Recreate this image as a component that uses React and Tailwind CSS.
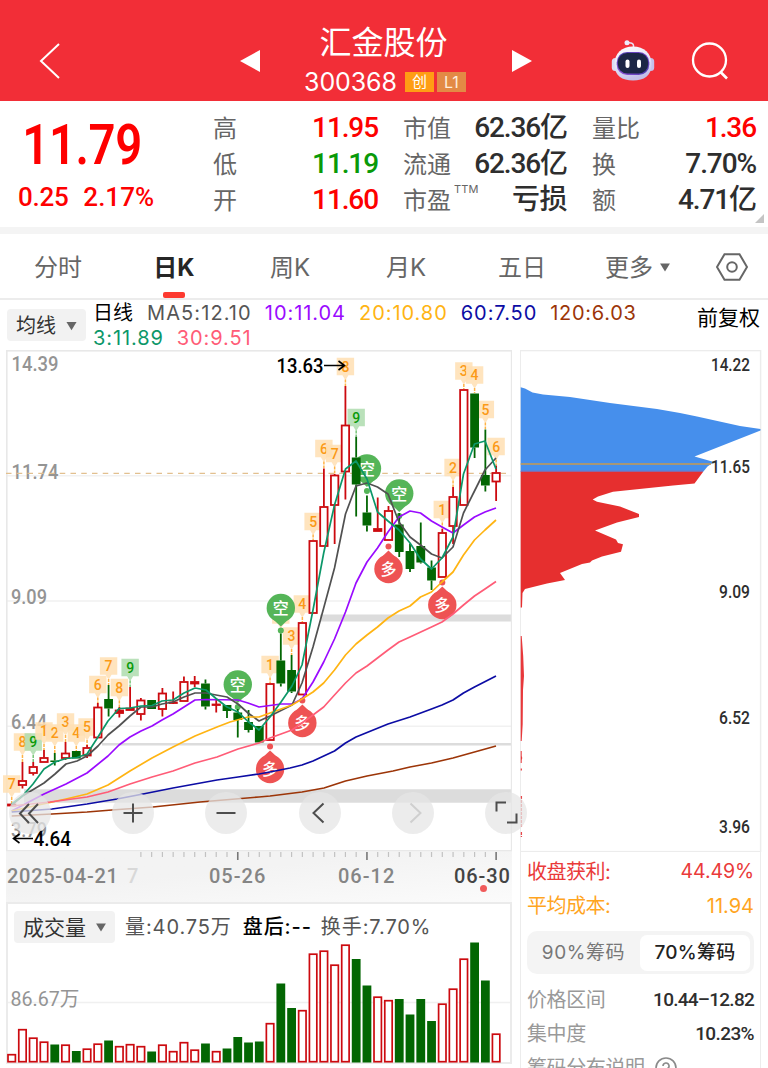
import React from 'react';

const RED = '#cc0a0f';
const GREEN = '#036603';
const STEP = 10.765;
const cx = (i) => 11.7 + STEP * i;

// [high, bodyTop, bodyBottom, low, isDown]
const CANDLES = [
  [804, 804, 806, 806], [762, 780.5, 785.5, 788.5], [762, 766.5, 773.5, 775.5], [750, 757.5, 762.5, 762.5],
  [753, 760.5, 762, 765.5, 1], [742, 753, 758.5, 760], [751, 751, 758.5, 758.5, 1], [745, 747.5, 756, 758],
  [703, 707, 738, 738], [685, 699, 708.5, 716.5, 1], [707, 710, 713.5, 717.5], [687, 708, 710.5, 710.5],
  [698, 700, 714.5, 720.5], [700, 700, 709, 709, 1], [688, 693, 709.5, 716.5], [691.5, 702, 703, 704],
  [676.5, 681.5, 701.5, 701.5], [676, 681.5, 684, 687], [679.5, 683.5, 706.5, 709.5, 1], [699, 704, 705, 712.5],
  [705, 705, 711, 718, 1], [709, 712.5, 720, 737.5, 1], [710, 722, 730, 732.5, 1], [726, 726, 742.5, 742.5, 1],
  [683.5, 683.5, 740.5, 740.5], [633.5, 660.5, 683.5, 686.5, 1], [655, 670, 691.5, 693, 1], [622.5, 622.5, 695, 695],
  [540.5, 540.5, 613.5, 613.5], [468.5, 506.5, 546.5, 546.5], [474, 475, 505.5, 544], [386, 425, 472, 499.5],
  [436.5, 457.5, 484.5, 516.5, 1], [495.5, 512.5, 525.5, 531.5, 1], [497.5, 528.5, 531.5, 531.5], [506, 510.5, 540.5, 540.5],
  [513, 524.5, 552, 557, 1], [543.5, 551, 569, 572, 1], [522.5, 546, 562.5, 563.5, 1], [560.5, 567.5, 580.5, 590, 1],
  [529, 532.5, 577.5, 577.5], [487, 496.5, 526.5, 544], [389.5, 389.5, 505.5, 505.5], [393.5, 393.5, 447.5, 458, 1],
  [429.5, 475, 485.5, 491.5, 1], [465.5, 472.5, 482, 501],
];

const VOLUME_TOPS = [
  1054, 1029, 1037.5, 1041.5, 1044.5, 1044.5, 1051, 1048.5, 1043.5, 1040.5, 1046, 1044, 1046, 1051.5, 1044.5, 1051,
  1042, 1049.5, 1043.5, 1051, 1048.5, 1037, 1042.5, 1041.5, 1023, 983.5, 1008, 1010, 953.5, 950.5, 964.5, 944.5,
  959, 985.5, 996.5, 1000, 999, 1014.5, 999, 1021, 1003.5, 988.5, 958.5, 942.5, 980.5, 1033.5,
];

const LINES = [
  { color: '#9a0bff', points: '11.7,811 44,794 66,784 87,773 108,756 119,745 130,737 141,731 152,726 162,720 173,714 184,707 195,700 206,699.5 238,700 248,703 259,707 281,704 292,704 302,699 313,682 323.7,662 334.5,639 345.5,612 356,583 367,562 377.5,548 388,532 399,517 410,511 420.5,513 431.5,521 442,527 453,533 463.5,525 474.5,517 485,512 496,508' },
  { color: '#515151', points: '11.7,805 22.5,796 44,783 55,774 66,764 77,761 87,756 98,746 108,735 119,726 130,716 141,707 152,707 162,704 173,702 184,697 195,693 206,693 216,695 227,697 238,704 248,713 259,721 270,716 292,705 302,683 313,647 323.7,608 334.5,568 345.5,514 356,486 367,483 377.5,487 388,494 399,522 410,537 420.5,545 431.5,554 442,558 453,547 463.5,513 474.5,491 485,470 496,458' },
  { color: '#ffb413', points: '11.7,811 43,804 66,799 87,794 108,785 130,771 152,758 173,747 195,736 217,727 230,722 248,717 259,717 270,713 292,705 302,699 313,692 323.7,683 334.5,670 345.5,655 356,644 367,635 377.5,627 388,618 399,611 410,606 420.5,597 431.5,592 442,582 453,572 463.5,555 474.5,540 485,530 496,520' },
  { color: '#ff5c77', points: '11.7,806 50,802 87,797 108,792 130,784 152,777 173,771 195,763 217,757 238,749 259,743 270,738 281,734 292,730 302,723 313,715 323.7,707 334.5,695 345.5,683 356,673 367,666 377.5,658 388,650 399,642 410,637 431.5,627 442,622 453,614 463.5,605 474.5,596 485,589 496,581.5' },
  { color: '#0c0ca4', points: '11.7,812 52,809 87,804 117,799 143,794 173,788 195,784 217,780 238,777 259,774 270,772 290,768 302,765 313,761 334.5,751 345.5,743 356,737 388,724 410,717 431.5,709 442,705 453,700 463.5,693 474.5,687 496,676' },
  { color: '#9c3508', points: '11.7,816 52,814 87,812 112,810 153,807 200,802 259,797 270,796 302,792 324,788 345.5,781 367,776 393,771 410,767 431.5,763 453,758 474.5,752 496,746' },
  { color: '#0c9769', points: '11.7,804 22.5,796 33,784 44,769 55,762 66,758.5 77,757.5 87,754 98,737 108,721 119,708.5 130,708 141,706 152,705.5 162,701 173,700 184,693 195,688 206,690 216,698.5 227,707 238,712 248,721.5 259,730 270,717 281,702 292,686 302,665 313,610 323.7,553 334.5,505 345.5,469 356,461 367,479 377.5,512 388,521 399,530 410,543 420.5,559 431.5,569 442,558 453,537 463.5,474 474.5,444 485,441 496,469' },
];

// [candle index, label, centre y, end of the dotted stem]
const FLAGS = [
  [0, 7, 784, 804], [1, 8, 742, 762], [2, 9, 742, 762], [3, 1, 731, 750], [4, 2, 733, 753], [5, 3, 722, 742],
  [6, 4, 733, 751], [7, 5, 727, 745], [8, 6, 684.5, 703], [9, 7, 666, 685], [10, 8, 687.5, 707], [11, 9, 667.5, 687],
  [24, 1, 664.5, 683], [25, 2, 615, 633], [26, 3, 636, 655], [27, 4, 604, 622], [28, 5, 521.5, 540], [29, 6, 448.5, 468],
  [30, 7, 453.5, 474], [31, 8, 366.5, 386], [32, 9, 417.5, 436], [40, 1, 509.5, 529], [41, 2, 467.5, 487],
  [42, 3, 371, 389], [43, 4, 375, 393], [44, 5, 409.5, 429], [45, 6, 446.5, 465],
];

const SHORTS = [[21, 684.5], [25, 608], [33, 468.5], [36, 493.5]];
const LONGS = [[24, 769], [27, 723], [35, 569], [40, 605]];

const QUOTES = [
  [['高', '11.95', 'text-[#fe0000]'], ['低', '11.19', 'text-[#099a09]'], ['开', '11.60', 'text-[#fe0000]']],
  [['市值', '62.36亿', 'text-[#2e2e2e]'], ['流通', '62.36亿', 'text-[#2e2e2e]'], ['市盈', '亏损', 'text-[#2e2e2e]']],
  [['量比', '1.36', 'text-[#fe0000]'], ['换', '7.70%', 'text-[#2e2e2e]'], ['额', '4.71亿', 'text-[#2e2e2e]']],
];

const NUM = "font-['Roboto','Noto_Sans_CJK_SC',sans-serif]";

const Caret = ({ className }) => (
  <svg viewBox="0 0 12 10" className={className}><path d="M0.5 0.5h11L6 9.5z" fill="currentColor" /></svg>
);

const Robot = () => (
  <svg viewBox="0 0 44 42" className="h-[42px] w-11">
    <defs>
      <linearGradient id="shell" x1="0" y1="0" x2="0.3" y2="1">
        <stop offset="0" stopColor="#ffffff" />
        <stop offset="0.6" stopColor="#e3e2f6" />
        <stop offset="1" stopColor="#c4c0e8" />
      </linearGradient>
      <linearGradient id="visor" x1="1" y1="0" x2="0" y2="1">
        <stop offset="0" stopColor="#7a45c8" />
        <stop offset="0.5" stopColor="#4e3fb0" />
        <stop offset="1" stopColor="#9a52dc" />
      </linearGradient>
    </defs>
    <path d="M22.500 8V5.500C22.500 3.200 20 2.500 16.500 3" fill="none" stroke="#e6e0f4" strokeWidth="1.500" />
    <circle cx="16" cy="2.800" r="2.500" fill="#eeeafb" />
    <rect x="0.8" y="18" width="7" height="13" rx="3.5" fill="#dddcf4" />
    <rect x="36.2" y="18" width="7" height="13" rx="3.5" fill="#c5c0ea" />
    <path d="M22 6.500C33 6.500 40.500 13 40.500 24.500S33 40.500 22 40.500 3.500 36 3.500 24.500 11 6.500 22 6.500z" fill="url(#shell)" />
    <rect x="5.700" y="12" width="32.600" height="23" rx="10.500" fill="url(#visor)" />
    <rect x="6.800" y="13" width="30.400" height="20.600" rx="9.500" fill="#1c2645" />
    <rect x="14.500" y="19.500" width="4" height="8.500" rx="2" fill="#fff" />
    <rect x="26" y="19.500" width="4" height="8.500" rx="2" fill="#fff" />
  </svg>
);

const Header = () => (
  <header className="flex h-[101px] shrink-0 bg-[#f22e37] pt-[26px] text-white">
    <div className="flex h-[70px] w-[240px] items-center pl-[39px]">
      <svg viewBox="0 0 22 36" className="h-9 w-[22px]"><path d="M20 1L2 18l18 17" fill="none" stroke="#fff" strokeWidth="2" /></svg>
    </div>
    <div className="flex h-[70px] w-[292px] items-center justify-between">
      <svg viewBox="0 0 20 22" className="h-[22px] w-5"><path d="M20 0v22L0 11z" fill="#fff" /></svg>
      <div className="flex flex-col items-center pr-[3px]">
        <h1 className="-mt-[3px] h-[38px] pr-[2px] text-[32px] leading-[38px]">汇金股份</h1>
        <div className="mt-[6px] flex h-7 items-center pl-[1px]">
          <span className="text-[25px] leading-7 tracking-[-0.1px]">300368</span>
          <span className="ml-2 flex h-5 w-[29px] items-center justify-center bg-[#ff9d14] text-[15px] leading-5">创</span>
          <span className="ml-[3px] flex h-5 w-[29px] items-center justify-center bg-[#e38a45] text-[16px] leading-5 text-[#ffeedd]">L1</span>
        </div>
      </div>
      <svg viewBox="0 0 20 22" className="h-[22px] w-5"><path d="M0 0v22l20-11z" fill="#fff" /></svg>
    </div>
    <div className="flex h-[70px] flex-1 items-center pl-[79px]">
      <Robot />
      <svg viewBox="0 0 38 38" className="ml-9 h-[38px] w-[38px]">
        <circle cx="18.500" cy="18" r="16.500" fill="none" stroke="#fff" strokeWidth="2.300" />
        <path d="M29.500 30L36 36.500" stroke="#fff" strokeWidth="2.600" />
      </svg>
    </div>
  </header>
);

const Quote = () => (
  <section className="relative flex h-[126px] shrink-0 pt-[9px]">
    <div className={`${NUM} w-[213px] font-medium text-[#fe0000]`}>
      <div className="h-[70px] origin-left scale-x-[0.86] pl-[26px] text-[55px] leading-[71px] font-semibold tracking-[-0.5px]">11.79</div>
      <div className="flex h-[34px] gap-[15px] pl-[18px] text-[26px] leading-[34px]">
        <span className="tracking-[-0.3px]">0.25</span>
        <span>2.17%</span>
      </div>
    </div>
    {QUOTES.map((col, c) => (
      <div key={c} className={c === 0 ? 'w-[165px]' : 'ml-[25px] w-[164px]'}>
        {col.map(([label, value, color]) => (
          <div key={label} className="flex h-9 items-center justify-between">
            <span className="flex pt-0.5 text-[24px] leading-9 text-[#666]">
              {label}
              {label === '市盈' && <sup className="top-0 ml-[3px] text-[11px] leading-3 tracking-[0.2px]">TTM</sup>}
            </span>
            <span className={`${NUM} ${color} text-[28px] leading-9 font-medium ${label === '市盈' ? 'tracking-[-0.5px]' : 'tracking-[-1.1px]'}`}>{value}</span>
          </div>
        ))}
      </div>
    ))}
    <svg viewBox="0 0 9 9" className="absolute right-1 bottom-[4px] h-[9px] w-[9px]"><path d="M9 0v9H0z" fill="#c4c4c4" /></svg>
  </section>
);

const Tabs = () => (
  <nav className="flex h-[66px] shrink-0 border-b-2 border-[#ececec] text-[24px] text-[#666]">
    {['分时', '日K', '周K', '月K', '五日', '更多'].map((tab) => (
      <div
        key={tab}
        className={`relative flex w-[116px] items-center justify-center pt-[3px] ${tab === '日K' ? 'font-bold text-[#262626]' : ''}`}
      >
        {tab}
        {tab === '更多' && <Caret className="ml-[6px] h-[9px] w-3" />}
        {tab === '日K' && <span className="absolute bottom-0 h-[6px] w-[22px] rounded-[2px] bg-[#fd3a30]" />}
      </div>
    ))}
    <div className="flex flex-1 items-center justify-center pt-0.5">
      <svg viewBox="0 0 32 28" className="h-7 w-8" fill="none" stroke="#666" strokeWidth="2">
        <path d="M8.500 1.200h15L31 14l-7.500 12.800h-15L1 14z" />
        <circle cx="16" cy="14" r="4.800" />
      </svg>
    </div>
  </nav>
);

const Averages = () => (
  <section className="flex h-[50px] shrink-0 pl-[7px] text-[20px]">
    <div className="mt-[9px] flex h-8 w-[79px] items-center rounded bg-[#f2f2f2] pt-px pl-[9px] text-[20px] text-[#333]">
      均线
      <Caret className="ml-2.5 h-[10px] w-[11px] text-[#666]" />
    </div>
    <div className="ml-[7px] flex-1 pt-px leading-[25px]">
      <div className="flex h-[25px] gap-[13px] tracking-[0.95px] whitespace-nowrap">
        <span className="mr-px tracking-normal text-black">日线</span>
        <span className="tracking-[1.1px] text-[#555]">MA5:12.10</span>
        <span className="text-[#9a0bff]">10:11.04</span>
        <span className="text-[#ffb413]">20:10.80</span>
        <span className="text-[#0c0ca4]">60:7.50</span>
        <span className="tracking-[0.7px] text-[#9c3508]">120:6.03</span>
      </div>
      <div className="flex h-[25px] gap-[13px] tracking-[0.9px]">
        <span className="text-[#0c9769]">3:11.89</span>
        <span className="text-[#ff5c77]">30:9.51</span>
      </div>
    </div>
    <span className="pt-[5px] pr-2 text-[21px] leading-[25px] text-black">前复权</span>
  </section>
);

const Flag = ({ i, label, y, end }) => {
  const x = cx(i);
  const nine = label === 9;
  return (
    <g>
      <path d={`M${x - 8.7} ${y - 8.7}h17.400v17.400h-5.700l-3 5-3-5h-5.700z`} fill={nine ? '#aedcae' : '#ffdfb3'} fillOpacity="0.85" />
      <path d={`M${x} ${y + 13}V${end}`} stroke={nine ? '#79c579' : '#ffb347'} strokeWidth="1.500" strokeDasharray="3 1" />
      <text x={x} y={y + 5} textAnchor="middle" fontSize="14" fontWeight="500" fill={nine ? '#099a09' : '#fb9a17'}>{label}</text>
    </g>
  );
};

const Balloon = ({ i, y, up }) => {
  const x = cx(i);
  const fill = up ? '#ee5353' : '#55b558';
  const d = up ? -1 : 1;
  return (
    <g fill={fill}>
      <circle cx={x} cy={y} r="14.200" />
      <path d={`M${x - 8} ${y + d * 11}L${x} ${y + d * 18.5}L${x + 8} ${y + d * 11}z`} />
      <circle cx={x} cy={y + d * 22.5} r="3" />
      <text x={x} y={y + 6} textAnchor="middle" fontSize="16" fontWeight="500" fill="#fff">{up ? '多' : '空'}</text>
    </g>
  );
};

const Candle = ({ i, data: [high, top, bottom, low, down] }) => {
  const x = cx(i);
  const color = down ? GREEN : RED;
  const h = Math.max(bottom - top, 1);
  return (
    <g stroke={color}>
      <path d={`M${x} ${high}V${top}M${x} ${bottom}V${low}`} strokeWidth="1.800" />
      {down
        ? <rect x={x - 4.4} y={top} width="8.800" height={h} fill={color} stroke="none" />
        : <rect x={x - 3.7} y={top + 0.5} width="7.400" height={Math.max(h - 1, 0.5)} fill={h > 4 ? '#fff' : RED} strokeWidth="1.800" />}
    </g>
  );
};

// DIN-like figures: squeezed to a fixed run width
const Fig = ({ x, y, w, children, ...rest }) => (
  <text x={x} y={y} textLength={w} lengthAdjust="spacingAndGlyphs" {...rest}>{children}</text>
);

const PriceChart = () => (
  <svg viewBox="0 350 512 502" className={`${NUM} block h-[502px] w-[512px]`}>
    <g stroke="#f1f1f1" strokeWidth="1.500">
      <path d="M7 475.800H511M7 601H511M7 726.300H511" />
    </g>
    <path d="M320 618H511" stroke="#dcdcdc" strokeWidth="7" />
    <path d="M102 744.200H511" stroke="#dcdcdc" strokeWidth="2.500" />
    <path d="M24 796H511" stroke="#dcdcdc" strokeWidth="13.500" />
    <rect x="6.800" y="350.800" width="504.800" height="500" fill="none" stroke="#e8e8e8" strokeWidth="1.600" />
    <g fill="#949494" fontSize="20" fontWeight="500">
      <Fig x="11.500" y="371" w="47">14.39</Fig>
      <Fig x="11.500" y="478.500" w="47">11.74</Fig>
      <Fig x="11" y="604" w="36">9.09</Fig>
      <Fig x="11" y="729" w="36">6.44</Fig>
      <Fig x="11" y="836.500" w="36">3.79</Fig>
    </g>
    <path d="M6 473.300H508" stroke="#e2c08f" strokeWidth="1.200" strokeDasharray="5.500 5.250" />
    {FLAGS.map(([i, label, y, end]) => <Flag key={i} i={i} label={label} y={y} end={end} />)}
    {SHORTS.map(([i, y]) => <Balloon key={i} i={i} y={y} />)}
    {LONGS.map(([i, y]) => <Balloon key={i} i={i} y={y} up />)}
    {CANDLES.map((data, i) => <Candle key={i} i={i} data={data} />)}
    {LINES.map(({ color, points }) => (
      <polyline key={color} points={points} fill="none" stroke={color} strokeWidth="1.700" strokeLinejoin="round" />
    ))}
    <g fill="#000" fontSize="20.500" fontWeight="500">
      <Fig x="276.500" y="373" w="47">13.63</Fig>
      <Fig x="33.500" y="846" w="37.500">4.64</Fig>
    </g>
    <g fill="none" stroke="#000" strokeWidth="1.600">
      <path d="M324 365.500h20M338.500 361l6 4.500-6 4.500" />
      <path d="M33 838.500H14M19.500 834l-6 4.500 6 4.500" />
    </g>
  </svg>
);

const BUTTONS = [
  { d: 'M20 12l-9 9.500 9 9.500M29 12l-9 9.500 9 9.500', gap: 'ml-[9px]' },
  { d: 'M11.500 21h19M21 11.500v19', gap: 'ml-[61px]' },
  { d: 'M11.500 21h19', gap: 'ml-[51px]' },
  { d: 'M24.500 11.500L14.500 21l10 9.500', gap: 'ml-[52px]' },
  { d: 'M18.500 11.500l10 9.500-10 9.500', gap: 'ml-[51px]', dim: true },
  { d: 'M11.500 19.500v-9h9.500M31.500 21.500v9H22', gap: 'ml-[51px]' },
];

const Controls = () => (
  <div className="absolute top-[442px] left-0 z-10 flex">
    {BUTTONS.map(({ d, gap, dim }) => (
      <button key={d} className={`${gap} h-[42px] w-[42px] rounded-full bg-[#e6e6e6]/75`}>
        <svg viewBox="0 0 42 42" className="h-[42px] w-[42px]">
          <path d={d} fill="none" stroke={dim ? '#cfcfcf' : '#4d4d4d'} strokeWidth="2" />
        </svg>
      </button>
    ))}
  </div>
);

const DateAxis = () => (
  <div className={`${NUM} relative ml-[6px] h-[50px] w-[506px] bg-linear-to-br from-[#f3f3f3] from-40% to-[#fbfbfb] text-[20px] font-medium text-[#858585]`}>
    <svg viewBox="6 852 506 10" className="block h-[10px] w-[506px]">
      {CANDLES.map((_, i) => {
        const major = i === 21 || i === 33 || i === 45;
        return i > 11 && (
          <path key={i} d={`M${cx(i)} 852v${major ? 8 : 5}`} stroke={major ? '#777' : '#c2c2c2'} strokeWidth={major ? 1.6 : 1.2} />
        );
      })}
    </svg>
    <div className="flex h-7 items-center pl-px whitespace-nowrap">
      <span className="w-[115px] tracking-[0.7px]">2025-04-21</span>
      <span className="ml-[5px] w-[82px] text-[#d8d8d8]">7</span>
      <span className="w-[129px] tracking-[1px]">05-26</span>
      <span className="w-[116px] tracking-[1px]">06-12</span>
      <span className="tracking-[0.9px] text-[#444]">06-30</span>
    </div>
    <span className="absolute right-[25px] bottom-[10px] h-[7px] w-[7px] rounded-full bg-[#f05a5a]" />
  </div>
);

const Volume = () => (
  <div className="relative ml-[6px] h-[162px] w-[506px] border-2 border-[#ebebeb] text-[20px]">
    <div className="flex h-[44px] items-center pt-[2px] pl-[6px] whitespace-nowrap">
      <div className="flex h-8 w-[101px] items-center rounded bg-[#f2f2f2] pt-px pl-[9px] text-[21px] text-[#333]">
        成交量
        <Caret className="ml-[9px] h-[9px] w-3 text-[#666]" />
      </div>
      <span className="ml-2.5 tracking-[0.9px] text-[#555]">量:40.75万</span>
      <span className="ml-[11px] font-medium tracking-[0.9px] text-black">盘后:--</span>
      <span className="ml-[9px] tracking-[0.9px] text-[#555]">换手:7.70%</span>
    </div>
    <svg viewBox="8 948 502 114" className={`${NUM} block h-[114px] w-[502px] overflow-visible`}>
      <path d="M8 1002.500H510" stroke="#f0f0f0" strokeWidth="1.500" />
      <Fig x="10.500" y="1005.500" w="69" fontSize="20.500" fill="#949494">86.67万</Fig>
      {VOLUME_TOPS.map((top, i) => (
        CANDLES[i][4]
          ? <rect key={i} x={cx(i) - 4.4} y={top} width="8.800" height={1062.5 - top} fill={GREEN} />
          : <rect key={i} x={cx(i) - 3.7} y={top + 0.7} width="7.400" height={1061 - top} fill="#fff" stroke={RED} strokeWidth="1.700" />
      ))}
    </svg>
  </div>
);

const ChipChart = () => (
  <svg viewBox="520 350 242 502" className={`${NUM} block h-[502px] w-[242px]`}>
    <rect x="520.300" y="350.600" width="240.300" height="501" fill="none" stroke="#ececec" strokeWidth="1.400" />
    <path d="M520.700 387.300L525 388.500 532.500 392.500 543 394.500 570 397 590 400 610 403 657 409 680 413 697 416.500 740 426 760.500 429 760.500 430.500 694.500 456.500 714 462 707.500 466.500 703 472H520.700z" fill="#468fec" />
    <path d="M520.700 472H703L694.500 483.600 673 485.500 637 489.300 613 491.700 598 496.500 592.700 499.500 597 501.700 620 506.500 639 514V517L617 522.500 595 530.500 616 539.500 618 543 623 544.300 621 551.700 602 556.500 592 560.500 590 562.500 582 564 560 573 565 580 547 583.500 525 589 522.500 593 522 607.500H520.700z" fill="#e62f2f" />
    <path d="M520.700 471.300H703" stroke="#8a68a5" strokeWidth="1.200" />
    <path d="M520.700 464H711" stroke="#c99a50" strokeWidth="1.300" />
    <path d="M520.700 636h1l1.500 20 .8 20-1 14-.3 34-1 17h-1zM520.700 751h1v5l.6 2-.6 2v3h-1zM520.700 768.500h1.200v2h-1.200z" fill="#e8383b" />
    <path d="M521.400 796v32M521.400 832v5" stroke="#e8484b" strokeWidth="1.300" strokeDasharray="3 1" />
    <g fill="#2e2e2e" fontSize="18.500" fontWeight="500">
      <Fig x="711" y="370.500" w="39">14.22</Fig>
      <Fig x="711" y="473" w="39">11.65</Fig>
      <Fig x="719" y="598" w="31">9.09</Fig>
      <Fig x="719" y="723.500" w="31">6.52</Fig>
      <Fig x="719" y="833" w="31">3.96</Fig>
    </g>
  </svg>
);

const ChipStats = () => (
  <div className="h-[216px] w-[241px] border-x border-[#ececec] pt-[3px] pr-[6px] pl-[6px] text-[20px]">
    <div className="flex h-[34px] items-center justify-between text-[#ea3a3a]">
      <span className="tracking-[-0.5px]">收盘获利:</span>
      <span className="text-[19.500px] tracking-[-0.1px]">44.49%</span>
    </div>
    <div className="flex h-[34px] items-center justify-between text-[#ffa51f]">
      <span className="tracking-[-0.5px]">平均成本:</span>
      <span>11.94</span>
    </div>
    <div className="mt-2 flex h-[43px] items-center rounded-[10px] bg-[#f4f4f4] pr-1 text-[19px]">
      <span className="flex-1 pt-0.5 text-center tracking-[0.6px] text-[#777]">90%筹码</span>
      <span className="flex h-9 w-[110px] items-center justify-center rounded-[7px] bg-white pt-0.5 font-medium tracking-[0.3px] text-[#222]">70%筹码</span>
    </div>
    <div className="mt-[9px] flex h-[34px] items-center justify-between">
      <span className="tracking-[-0.4px] text-[#999]">价格区间</span>
      <span className={`${NUM} text-[19px] font-medium tracking-[-0.75px] text-[#2e2e2e]`}>10.44–12.82</span>
    </div>
    <div className="flex h-[34px] items-center justify-between">
      <span className="tracking-[-0.4px] text-[#999]">集中度</span>
      <span className={`${NUM} text-[19px] font-medium tracking-[-0.6px] text-[#2e2e2e]`}>10.23%</span>
    </div>
    <div className="flex h-[34px] items-center tracking-[-0.4px] text-[#999]">
      筹码分布说明
      <svg viewBox="0 0 22 22" className="ml-2.5 h-[22px] w-[22px]" fill="none" stroke="#8a8a8a" strokeWidth="1.600">
        <circle cx="11" cy="11" r="10" />
        <path d="M8 9a3 3 0 1 1 4 2.800c-.8.300-1 .8-1 2M11 15.500v1.500" />
      </svg>
    </div>
  </div>
);

const App = () => (
  <div className="flex h-[1068px] w-[768px] flex-col overflow-hidden bg-white font-['Inter','Noto_Sans_CJK_SC',sans-serif]">
    <Header />
    <Quote />
    <div className="h-[7px] shrink-0 bg-[#f4f4f4]" />
    <Tabs />
    <Averages />
    <main className="relative flex flex-1">
      <div className="w-[520px]">
        <PriceChart />
        <DateAxis />
        <Volume />
      </div>
      <div className="w-[242px]">
        <ChipChart />
        <ChipStats />
      </div>
      <Controls />
    </main>
  </div>
);

export default App;
